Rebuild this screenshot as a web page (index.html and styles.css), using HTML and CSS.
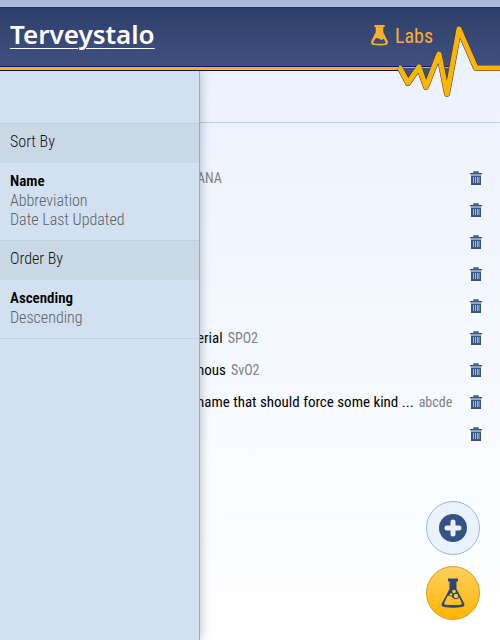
FILE: index.html
```html
<!DOCTYPE html>
<html lang="en">
<head>
<meta charset="utf-8">
<meta name="viewport" content="width=device-width, initial-scale=1">
<title>Terveystalo Labs</title>
<link rel="stylesheet" href="styles.css">
</head>
<body>
<svg class="sprite" aria-hidden="true">
  <symbol id="trash" viewBox="0 0 12 14">
    <path d="M4 2V1h4v1" fill="none" stroke="currentColor" stroke-width="1.4"/>
    <path d="M0 2h12v1.6H0zM1 4.6h10V14H1z" fill="currentColor"/>
    <path d="M3.5 6v6M5.5 6v6M7.5 6v6M9 6v6" stroke="#a9bad6" stroke-width="1"/>
  </symbol>
</svg>
<header class="header">
  <a class="brand" href="#">Terveystalo</a>
  <h1 class="title">
    <svg class="title-icon" viewBox="0 0 18 22" aria-hidden="true">
      <path d="M3.500 0h11v2h-1.500v5.500l4.500 9q1.500 4-2 4.500-6 1-13 0-3.500-.5-2-4.500l4.500-9V2h-1.500z" fill="currentColor"/>
      <path d="M4.500 14.500q1.500-1.500 3-.5t3 1.500 3-1l2 3.500q.5 1.500-1 1.500-5.500.6-11 0-1.500 0-1-1.500z" fill="#3a4b7b"/>
    </svg>
    Labs
  </h1>
  <svg class="pulse" viewBox="0 0 110 80" aria-hidden="true">
    <path d="M10 49L18 64 29 48 36 68 43 49zM52 49L57 75 62 49z" fill="#3f5080"/>
    <path d="M43 53L49 35 53 53zM61 53L69 10 87 53z" fill="#eaf2fe"/>
    <path class="pulse-edge" d="M10 49L18 64 29 48 36 68 49 35 57 75 69 10 86 49H110"/>
    <path class="pulse-line" d="M9 49H10L18 64 29 48 36 68 49 35 57 75 69 10 86 49H110"/>
  </svg>
</header>
<div class="page">
  <aside class="drawer">
    <h2 class="drawer-heading">Sort By</h2>
    <div class="options">
      <button class="option selected" type="button">Name</button>
      <button class="option" type="button">Abbreviation</button>
      <button class="option" type="button">Date Last Updated</button>
    </div>
    <h2 class="drawer-heading">Order By</h2>
    <div class="options last">
      <button class="option selected" type="button">Ascending</button>
      <button class="option" type="button">Descending</button>
    </div>
  </aside>
  <main class="content">
    <div class="toolbar"></div>
    <ul class="labs">
      <li class="lab"><span class="abbr">ANA</span><button class="delete" type="button" aria-label="Delete"><svg><use href="#trash"/></svg></button></li>
      <li class="lab"><button class="delete" type="button" aria-label="Delete"><svg><use href="#trash"/></svg></button></li>
      <li class="lab"><button class="delete" type="button" aria-label="Delete"><svg><use href="#trash"/></svg></button></li>
      <li class="lab"><button class="delete" type="button" aria-label="Delete"><svg><use href="#trash"/></svg></button></li>
      <li class="lab"><button class="delete" type="button" aria-label="Delete"><svg><use href="#trash"/></svg></button></li>
      <li class="lab"><span class="name">erial</span><span class="abbr">SPO2</span><button class="delete" type="button" aria-label="Delete"><svg><use href="#trash"/></svg></button></li>
      <li class="lab"><span class="name">nous</span><span class="abbr">SvO2</span><button class="delete" type="button" aria-label="Delete"><svg><use href="#trash"/></svg></button></li>
      <li class="lab"><span class="name">name that should force some kind ...</span><span class="abbr">abcde</span><button class="delete" type="button" aria-label="Delete"><svg><use href="#trash"/></svg></button></li>
      <li class="lab"><button class="delete" type="button" aria-label="Delete"><svg><use href="#trash"/></svg></button></li>
    </ul>
  </main>
</div>
<div class="actions">
  <button class="round" type="button" aria-label="Add">
    <svg width="28" height="28" viewBox="0 0 28 28"><circle cx="14" cy="14" r="14" fill="#345382"/><path d="M14 8v12M8 14h12" stroke="#eaf2fe" stroke-width="5" stroke-linecap="round"/></svg>
  </button>
  <button class="round gold" type="button" aria-label="Labs">
    <svg width="24" height="30" viewBox="0 0 24 30"><path d="M7 .5h10v3h-1.500V11L23 25q1.500 3.500-2 4-9 1.500-18 0-3.500-.5-2-4L8.500 11V3.500H7z" fill="#2f4573"/><path d="M6.500 18q3-1 5 1.500 2.500 2.500 5 .5l1.500-1 2.500 5.500q1 2-1 2.200-7.500.8-15 0-2-.2-1-2.200z" fill="#ffc22a"/><g fill="#ffc936"><circle cx="13" cy="13.500" r="1.800"/><circle cx="10" cy="16.500" r="1.300"/><circle cx="15" cy="18" r="2.500"/></g><circle cx="15" cy="18" r="2.800" fill="none" stroke="#2f4573"/></svg>
  </button>
</div>
</body>
</html>
```
FILE: styles.css
```css
* { box-sizing: border-box; }

body {
  margin: 0;
  min-height: 100vh;
  display: flex;
  flex-direction: column;
  border-top: 7px solid #abbbd5;
  font: 16px/19px "Roboto Condensed", "Liberation Sans Narrow", "Liberation Sans", sans-serif;
  color: #000;
  background: linear-gradient(#e9f1fe, #fff);
}

button { font: inherit; color: inherit; border: 0; padding: 0; background: none; cursor: pointer; }
h1, h2, ul { margin: 0; padding: 0; font-weight: normal; }
.sprite { position: absolute; width: 0; height: 0; }

.header {
  position: relative;
  z-index: 3;
  height: 64px;
  padding: 0 67px 8px 10px;
  display: flex;
  align-items: center;
  justify-content: space-between;
  background: linear-gradient(#ffae22, #ffae22) 0 59px / 100% 3px no-repeat, linear-gradient(#1b1464, #1b1464) 0 58px / 100% 5px no-repeat, linear-gradient(#2f3f6a, #415283);
  border-top: 1px solid #26345a;
}

.brand {
  padding-bottom: 4px;
  font: 600 26px/30px "Noto Sans", sans-serif;
  color: #fff;
  text-decoration: underline 1px;
  text-underline-offset: 4px;
}

.title {
  display: flex;
  align-items: center;
  gap: 7px;
  font-size: 20px;
  line-height: 28px;
  color: #ffae2a;
}
.title-icon { width: 17px; height: 21px; }

.pulse { position: absolute; right: 0; top: 11px; width: 110px; height: 80px; }
.pulse path { stroke-linejoin: round; }
.pulse-edge { fill: none; stroke: #3c3550; stroke-width: 6; }
.pulse-line { fill: none; stroke: #ffb400; stroke-width: 5; }

.page { position: relative; flex: 1; display: flex; }

.drawer {
  position: absolute;
  z-index: 2;
  top: 0;
  bottom: 0;
  left: 0;
  width: 200px;
  padding-top: 52px;
  background: #d3e0ef;
  border-right: 1px solid #9cacc5;
  box-shadow: 0 0 10px rgba(60, 80, 110, .4);
}
.drawer-heading {
  padding: 8px 10px 12px;
  font-weight: 300;
  line-height: 19px;
  font-size: 16px;
  color: #111;
  background: #cad8e5;
  border-top: 1px solid #c0cfdf;
}
.options {
  padding: 9px 10px 11px;
  display: flex;
  flex-direction: column;
  align-items: flex-start;
}
.options.last { border-bottom: 1px solid #c3d1e0; }
.option { font-weight: 300; color: #56616b; }
.option.selected { font-size: 15px; color: #000; font-weight: 600; }

.content { flex: 1; }
.toolbar { height: 52px; border-bottom: 1px solid #bccde2; }
.labs { padding: 39px 18px 0 197px; list-style: none; font-size: 15px; white-space: nowrap; }
.lab { height: 32px; display: flex; align-items: center; gap: 5px; }
.abbr { font-size: 14px; color: #808285; }
.delete { width: 12px; height: 14px; margin-left: auto; color: #345382; }
.delete svg { display: block; width: 12px; height: 14px; }

.actions {
  position: fixed;
  z-index: 2;
  right: 20px;
  bottom: 20px;
  display: flex;
  flex-direction: column;
  gap: 11px;
}
.round {
  width: 54px;
  height: 54px;
  display: flex;
  align-items: center;
  justify-content: center;
  border: 1px solid #9fb4d1;
  border-radius: 50%;
  background: #eaf2fe;
}
.round.gold { border-color: #d99f1c; background: linear-gradient(#ffd060, #ffb400); }
```
